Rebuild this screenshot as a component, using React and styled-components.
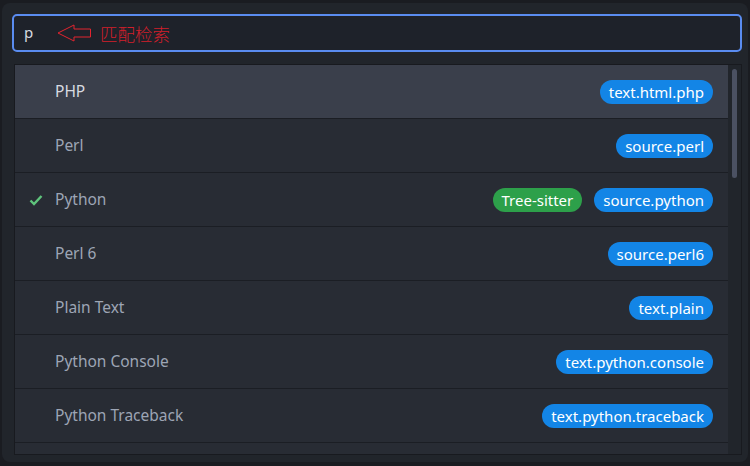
import React from 'react';
import styled, { createGlobalStyle } from 'styled-components';

const GlobalStyle = createGlobalStyle`
  html, body {
    margin: 0;
    padding: 0;
    background: #1a1c21;
  }
  body {
    font-family: "Noto Sans", "Open Sans", sans-serif;
    width: 750px;
    height: 466px;
    overflow: hidden;
  }
`;

const Panel = styled.div`
  margin: 3px 2px 0 2px;
  height: 459px;
  box-sizing: border-box;
  background: #21252b;
  border-radius: 8px;
  padding: 11px 6px 0 10px;
  display: flex;
  flex-direction: column;
  gap: 12px;
`;

const SearchBox = styled.div`
  height: 38px;
  box-sizing: border-box;
  border: 2px solid #5a8cf0;
  border-radius: 5px;
  background: #1e222a;
  display: flex;
  align-items: center;
  padding-left: 10px;
  gap: 19px;
`;

const Query = styled.span`
  color: #d7dae0;
  font-size: 15px;
  width: 14px;
  margin-top: -2px;
`;

const Note = styled.span`
  display: flex;
  align-items: center;
  gap: 8px;
  color: #d21f2b;
  font-family: "Noto Sans CJK SC", serif;
  font-size: 17.5px;
  font-weight: 300;
`;

const List = styled.div`
  margin: 0 0 0 2px;
  height: 389px;
  border: 1px solid #181a1f;
  display: flex;
  overflow: hidden;
  background: #282c34;
`;

const Rows = styled.div`
  flex: 1;
  display: flex;
  flex-direction: column;
`;

const Row = styled.div`
  flex: 0 0 auto;
  height: 53px;
  border-bottom: 1px solid #1b1e24;
  background: ${p => (p.$selected ? '#3a3f4b' : '#282c34')};
  display: flex;
  align-items: center;
  padding: 0 15px 0 14px;
`;

const Check = styled.span`
  flex: 0 0 26px;
  height: 16px;
  display: flex;
  align-items: center;
`;

const Name = styled.span`
  flex: 1;
  font-size: 15.5px;
  color: ${p => (p.$selected ? '#d7dae0' : '#9da5b4')};
  margin-top: -1px;
`;

const Badges = styled.div`
  display: flex;
  gap: 12px;
`;

const Badge = styled.span`
  height: 24px;
  box-sizing: border-box;
  padding: 0 9px;
  border-radius: 12px;
  background: ${p => (p.$green ? '#2da04a' : '#1385e6')};
  color: #ffffff;
  font-size: 15px;
  line-height: 24px;
  white-space: nowrap;
`;

const Track = styled.div`
  width: 13px;
  background: #21252b;
  display: flex;
  justify-content: center;
  padding-top: 4px;
`;

const Thumb = styled.div`
  width: 5px;
  height: 109px;
  border-radius: 3px;
  background: #4b5162;
`;

const items = [
  { name: 'PHP', badges: ['text.html.php'], selected: true },
  { name: 'Perl', badges: ['source.perl'] },
  { name: 'Python', badges: ['source.python'], tree: true, checked: true },
  { name: 'Perl 6', badges: ['source.perl6'] },
  { name: 'Plain Text', badges: ['text.plain'] },
  { name: 'Python Console', badges: ['text.python.console'] },
  { name: 'Python Traceback', badges: ['text.python.traceback'] },
  { name: '', badges: [] },
];

function Arrow() {
  return (
    <svg width="35" height="18" viewBox="0 0 35 18">
      <path
        d="M1 9 L17 1 L17 5 L33.5 5 L33.5 13 L17 13 L17 17 Z"
        fill="none"
        stroke="#e3242f"
        strokeWidth="1"
      />
    </svg>
  );
}

function CheckMark() {
  return (
    <svg width="14" height="12" viewBox="0 0 14 12">
      <path d="M1.5 6.5 L5 10 L12.5 2" fill="none" stroke="#5fc47c" strokeWidth="2.4" />
    </svg>
  );
}

export default function App() {
  return (
    <>
      <GlobalStyle />
      <Panel>
        <SearchBox>
          <Query>p</Query>
          <Note>
            <Arrow />
            匹配检索
          </Note>
        </SearchBox>
        <List>
          <Rows>
            {items.map((it, i) => (
              <Row key={i} $selected={it.selected}>
                <Check>{it.checked && <CheckMark />}</Check>
                <Name $selected={it.selected}>{it.name}</Name>
                <Badges>
                  {it.tree && <Badge $green>Tree-sitter</Badge>}
                  {it.badges.map(b => (
                    <Badge key={b}>{b}</Badge>
                  ))}
                </Badges>
              </Row>
            ))}
          </Rows>
          <Track>
            <Thumb />
          </Track>
        </List>
      </Panel>
    </>
  );
}
